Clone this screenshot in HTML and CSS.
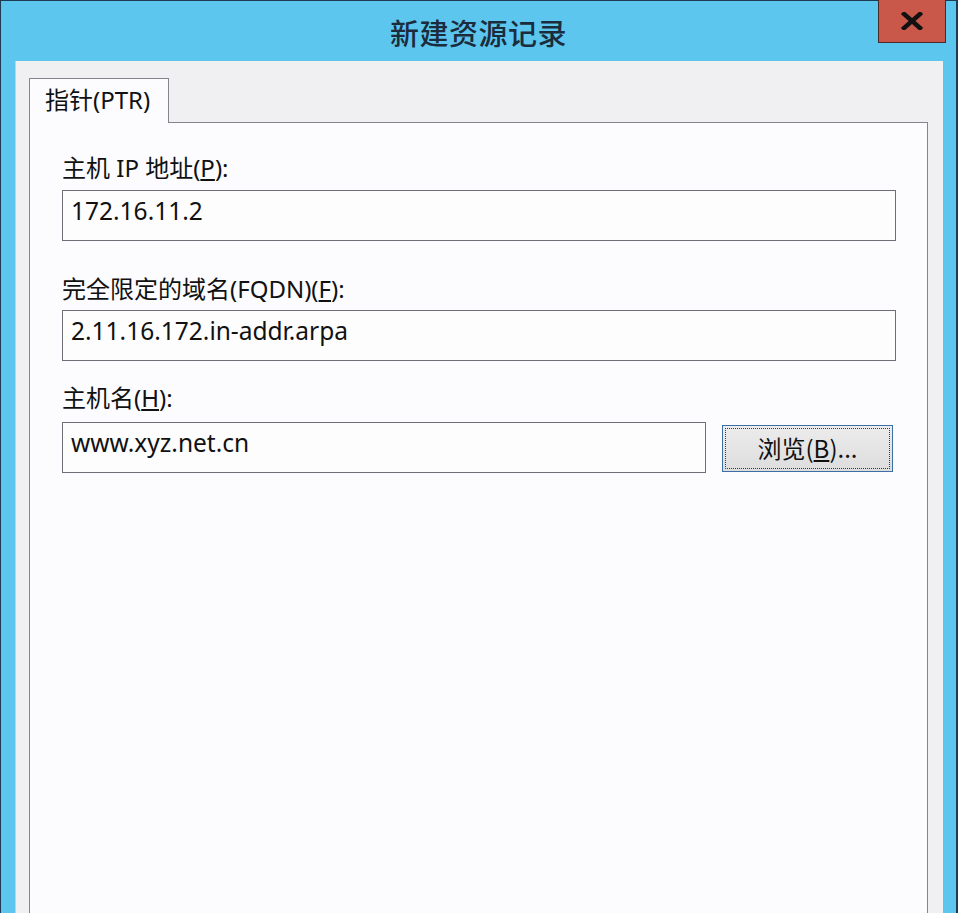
FILE: index.html
```html
<!DOCTYPE html>
<html lang="zh-CN">
<head>
    <meta charset="UTF-8">
    <title>新建资源记录</title>
    <link rel="stylesheet" href="styles.css">
</head>
<body>
    <div class="window">
        <div class="titlebar">
            <span></span>
            <h1 class="title">新建资源记录</h1>
            <button class="close-btn" type="button">
                <svg width="22" height="18" viewBox="0 0 22 18">
                    <path d="M3 2 L19 16 M19 2 L3 16" stroke="#111" stroke-width="4.5" stroke-linecap="square"/>
                </svg>
            </button>
        </div>

        <div class="client">
            <div class="tabs">
                <div class="tab active">指针(PTR)</div>
            </div>
            <div class="panel">
                <div class="field field-ip">
                    <label>主机 IP 地址(<u>P</u>):</label>
                    <div class="edit">172.16.11.2</div>
                </div>
                <div class="field field-fqdn">
                    <label>完全限定的域名(FQDN)(<u>F</u>):</label>
                    <div class="edit">2.11.16.172.in-addr.arpa</div>
                </div>
                <div class="field field-host">
                    <label>主机名(<u>H</u>):</label>
                    <div class="row">
                        <div class="edit edit-host">www.xyz.net.cn</div>
                        <button class="browse-btn" type="button"><span>浏览(<u>B</u>)...</span></button>
                    </div>
                </div>
            </div>
        </div>
    </div>
</body>
</html>
```

FILE: styles.css
```css
html, body {
    margin: 0;
    padding: 0;
    height: 100%;
    overflow: hidden;
}

body {
    font-family: "Noto Sans", "Noto Sans CJK SC", sans-serif;
    color: #111;
    background: #5cc6ee;
}

.window {
    box-sizing: border-box;
    width: 958px;
    height: 913px;
    background: #5cc6ee;
    border: 1px solid #1d3b52;
    border-bottom: none;
    border-right-width: 2px;
    display: flex;
    flex-direction: column;
}

/* title bar: centered caption, close button on the right */
.titlebar {
    height: 60px;
    display: grid;
    grid-template-columns: 1fr auto 1fr;
    align-items: start;
}

.title {
    margin: 0;
    padding-top: 11px;
    font-family: "Noto Sans CJK SC", sans-serif;
    font-weight: 500;
    font-size: 29px;
    line-height: 40px;
    color: #1b2c3c;
    letter-spacing: 0.5px;
}

.close-btn {
    justify-self: end;
    margin: -1px 10px 0 0;
    width: 68px;
    height: 43px;
    background: #c9584b;
    border: 1px solid #4a2a26;
    border-top: none;
    padding: 0;
    display: flex;
    align-items: center;
    justify-content: center;
}

/* client area */
.client {
    flex: 1;
    margin: 0 13px 0 14px;
    background: #f0f0f2;
    border-left: 1px solid #a6dcf2;
    padding: 17px 15px 0 13px;
    display: flex;
    flex-direction: column;
}

.tabs {
    display: flex;
    height: 44px;
}

.tab {
    box-sizing: border-box;
    width: 140px;
    height: 45px;
    background: #fcfcfe;
    border: 1px solid #84848c;
    border-bottom: none;
    padding-left: 15px;
    font-size: 24px;
    line-height: 42px;
    position: relative;
    z-index: 1;
}

.panel {
    flex: 1;
    background: #fcfcfe;
    border: 1px solid #84848c;
    border-bottom: none;
    padding: 30px 31px 0 32px;
}

.field label {
    display: block;
    font-size: 24px;
    line-height: 30px;
}

.field-fqdn {
    margin-top: 33px;
}

.field-host {
    margin-top: 22px;
}

.field-ip .edit {
    margin-top: 7px;
}

.field-fqdn .edit {
    margin-top: 6px;
}

.field-host .row {
    margin-top: 9px;
}

.edit {
    box-sizing: border-box;
    height: 51px;
    background: #fdfdfd;
    border: 1px solid #6f6f78;
    padding: 5px 0 0 8px;
    font-size: 24.5px;
    line-height: 30px;
}

.row {
    display: flex;
    align-items: center;
    gap: 16px;
}

.edit-host {
    width: 644px;
}

.browse-btn {
    box-sizing: border-box;
    width: 171px;
    height: 47px;
    margin-top: 1px;
    padding: 2px;
    border: 1px solid #3c6fa6;
    background: linear-gradient(#ececec, #dddddd);
    font-family: "Noto Sans CJK SC", "Noto Sans", sans-serif;
    font-size: 24px;
    color: #111;
    display: flex;
}

.browse-btn span {
    flex: 1;
    border: 1px dotted #2c3f5a;
    display: flex;
    align-items: center;
    justify-content: center;
    line-height: 1;
}
```
